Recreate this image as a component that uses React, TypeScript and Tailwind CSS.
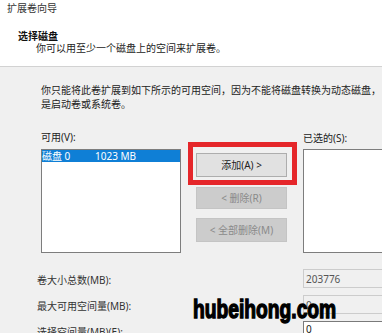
import React from 'react'

const font = { fontFamily: '"Noto Sans", "Noto Sans CJK SC", sans-serif' }

function ValueRow({ label, value, editable }: { label: string; value: string; editable?: boolean }) {
  return (
    <div className="flex items-start h-[19px]">
      <div className="w-[266px] shrink-0 pt-[5px] leading-[12px] text-[#333]">{label}</div>
      <div
        className={
          editable
            ? 'w-[90px] shrink-0 h-[19px] border border-[#7a7a7a] bg-white pl-[2px] pt-[1px] leading-[12px] text-[#222]'
            : 'w-[90px] shrink-0 h-[19px] border border-[#cccccc] bg-[#f0f0f0] pl-[2px] pt-[3px] leading-[12px] text-[#555]'
        }
      >
        {value}
      </div>
    </div>
  )
}

export default function App() {
  return (
    <div className="relative w-[382px] h-[333px] overflow-hidden bg-[#f0f0f0] text-[10px]" style={font}>
      {/* Header */}
      <div className="h-[67px] bg-white border-b border-[#d2d2d2]">
        <div className="pl-[7px] pt-[1px] leading-[14px] text-[#333]">扩展卷向导</div>
        <div className="pl-[18px] mt-[15px] leading-[12px] font-bold text-[#111]">选择磁盘</div>
        <div className="pl-[36px] leading-[12px] text-[#222]">你可以用至少一个磁盘上的空间来扩展卷。</div>
      </div>

      {/* Body */}
      <div className="pl-[41px] pt-[16px] text-[#222]">
        <p className="leading-[14px] whitespace-nowrap">
          你只能将此卷扩展到如下所示的可用空间，因为不能将磁盘转换为动态磁盘，
        </p>
        <p className="leading-[14px]">是启动卷或系统卷。</p>

        <div className="flex mt-[19px]">
          {/* Available */}
          <div className="w-[140px] shrink-0">
            <div className="leading-[14px]">可用(V):</div>
            <div className="mt-[5px] h-[104px] border border-[#7d7d7d] bg-white">
              <div className="flex h-[12px] leading-[12px] bg-[#0f7fd6] text-white">
                <span className="w-[53px]">磁盘 0</span>
                <span>1023 MB</span>
              </div>
            </div>
          </div>

          {/* Buttons */}
          <div className="ml-[7px] pt-[12px] w-[109px] shrink-0">
            <div className="h-[43px] border-[5px] border-[#e5262a] pt-[6px] px-[3px]">
              <button className="w-[91px] h-[24px] border border-[#adadad] bg-[#e1e1e1] text-[#222] leading-[20px]">
                添加(A) &gt;
              </button>
            </div>
            <button className="ml-[8px] mt-[2px] w-[91px] h-[22px] bg-[#cccccc] border border-[#c4c4c4] text-[#8a8a8a] leading-[18px]">
              &lt; 删除(R)
            </button>
            <button className="ml-[8px] mt-[9px] w-[91px] h-[24px] bg-[#cccccc] border border-[#c4c4c4] text-[#8a8a8a] leading-[20px]">
              &lt; 全部删除(M)
            </button>
          </div>

          {/* Selected */}
          <div className="ml-[6px] w-[100px] shrink-0">
            <div className="leading-[14px] pt-[1px]">已选的(S):</div>
            <div className="mt-[4px] h-[104px] border border-[#7d7d7d] bg-white" />
          </div>
        </div>
      </div>

      {/* Size rows */}
      <div className="pl-[37px] mt-[16px] flex flex-col gap-[7px]">
        <ValueRow label="卷大小总数(MB):" value="203776" />
        <ValueRow label="最大可用空间量(MB):" value="0" />
        <ValueRow label="选择空间量(MB)(E):" value="0" editable />
      </div>

      {/* Watermark */}
      <div
        className="absolute left-[193px] top-[296px] text-[26px] leading-[26px] font-bold text-black scale-x-[0.74] origin-left whitespace-nowrap [-webkit-text-stroke:1.4px_black]"
        style={{ fontFamily: '"Liberation Sans", sans-serif' }}
      >
        hubeihong.com
      </div>
    </div>
  )
}
